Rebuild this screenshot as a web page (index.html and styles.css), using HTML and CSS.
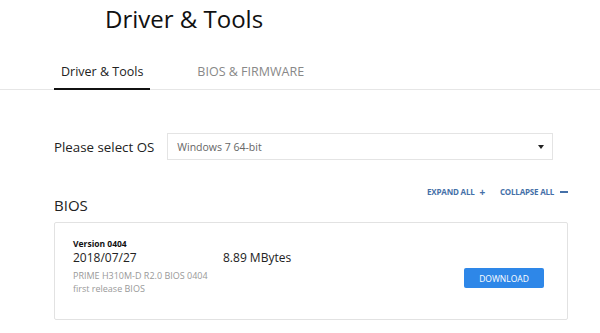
FILE: index.html
```html
<!DOCTYPE html>
<html lang="en">
<head>
  <meta charset="UTF-8">
  <meta name="viewport" content="width=device-width, initial-scale=1">
  <title>Driver &amp; Tools</title>
  <link rel="stylesheet" href="styles.css">
</head>
<body>
  <h1 class="page-title">Driver &amp; Tools</h1>

  <div class="tabs">
    <div class="tab active">Driver &amp; Tools</div>
    <div class="tab">BIOS &amp; FIRMWARE</div>
  </div>

  <div class="container">
    <div class="os-row">
      <label class="os-label">Please select OS</label>
      <div class="select">
        <span>Windows 7 64-bit</span>
        <span class="caret"></span>
      </div>
    </div>

    <div class="toggles">
      <a class="toggle">EXPAND ALL <span class="sign">+</span></a>
      <a class="toggle">COLLAPSE ALL <span class="dash"></span></a>
    </div>

    <h2 class="section-title">BIOS</h2>

    <div class="card">
      <div class="info">
        <div class="version">Version 0404</div>
        <div class="meta">
          <span class="date">2018/07/27</span>
          <span class="size">8.89 MBytes</span>
        </div>
        <div class="desc">PRIME H310M-D R2.0 BIOS 0404<br>first release BIOS</div>
      </div>
      <button class="download">DOWNLOAD</button>
    </div>
  </div>
</body>
</html>
```

FILE: styles.css
```css
body {
  font-family: 'Open Sans', 'Noto Sans', sans-serif;
  background: #fff;
  color: #222;
  margin: 0;
  padding: 0;
}

.page-title {
  font-weight: 400;
  font-size: 24px;
  margin: 0;
  padding: 2px 0 0 105px;
  line-height: 34px;
  color: #111;
}

.tabs {
  display: flex;
  gap: 40px;
  padding: 27px 0 0 54px;
  border-bottom: 1px solid #e6e6e6;
}

.tab {
  font-size: 12.5px;
  color: #888;
  padding: 0 7px 7px;
  line-height: 18px;
}

.tab.active {
  color: #222;
  border-bottom: 2px solid #111;
  margin-bottom: -1px;
}

.container {
  padding: 0 32px 0 54px;
}

.os-row {
  display: flex;
  align-items: center;
  gap: 13px;
  margin-top: 43px;
}

.os-label {
  font-size: 13.3px;
}

.select {
  width: 386px;
  height: 27px;
  border: 1px solid #e4e4e4;
  display: flex;
  align-items: center;
  justify-content: space-between;
  padding: 0 8px 0 9px;
  font-size: 10.5px;
  color: #666;
  box-sizing: border-box;
}

.caret {
  width: 0;
  height: 0;
  border-left: 3.5px solid transparent;
  border-right: 3.5px solid transparent;
  border-top: 4px solid #222;
}

.toggles {
  display: flex;
  justify-content: flex-end;
  align-items: center;
  gap: 15px;
  margin-top: 26px;
  height: 12px;
  line-height: 12px;
}

.toggle {
  display: flex;
  align-items: center;
  font-size: 8px;
  font-weight: 700;
  color: #4570a8;
  letter-spacing: -0.2px;
  white-space: pre;
}

.toggle .sign {
  margin-left: 3px;
  font-size: 10px;
}

.toggle .dash {
  display: inline-block;
  width: 8px;
  height: 1.5px;
  margin-left: 4px;
  background: #4570a8;
}

.section-title {
  font-size: 15px;
  font-weight: 400;
  margin: -3px 0 7px;
  line-height: 20px;
}

.card {
  border: 1px solid #e2e2e2;
  border-radius: 2px;
  height: 98px;
  box-sizing: border-box;
  padding: 15px 23px 0 18px;
  display: flex;
  justify-content: space-between;
  align-items: flex-start;
}

.version {
  font-size: 8.5px;
  font-weight: 700;
  color: #111;
}

.meta {
  display: flex;
  font-size: 12px;
  line-height: 17px;
}

.date {
  width: 150px;
}

.desc {
  font-size: 9px;
  color: #999;
  margin-top: 3px;
  line-height: 13px;
}

.download {
  margin-top: 30px;
  width: 80px;
  height: 20px;
  background: #2e87e8;
  color: #fff;
  border: none;
  border-radius: 2px;
  font-family: inherit;
  font-size: 8.5px;
  padding: 0;
}
```
